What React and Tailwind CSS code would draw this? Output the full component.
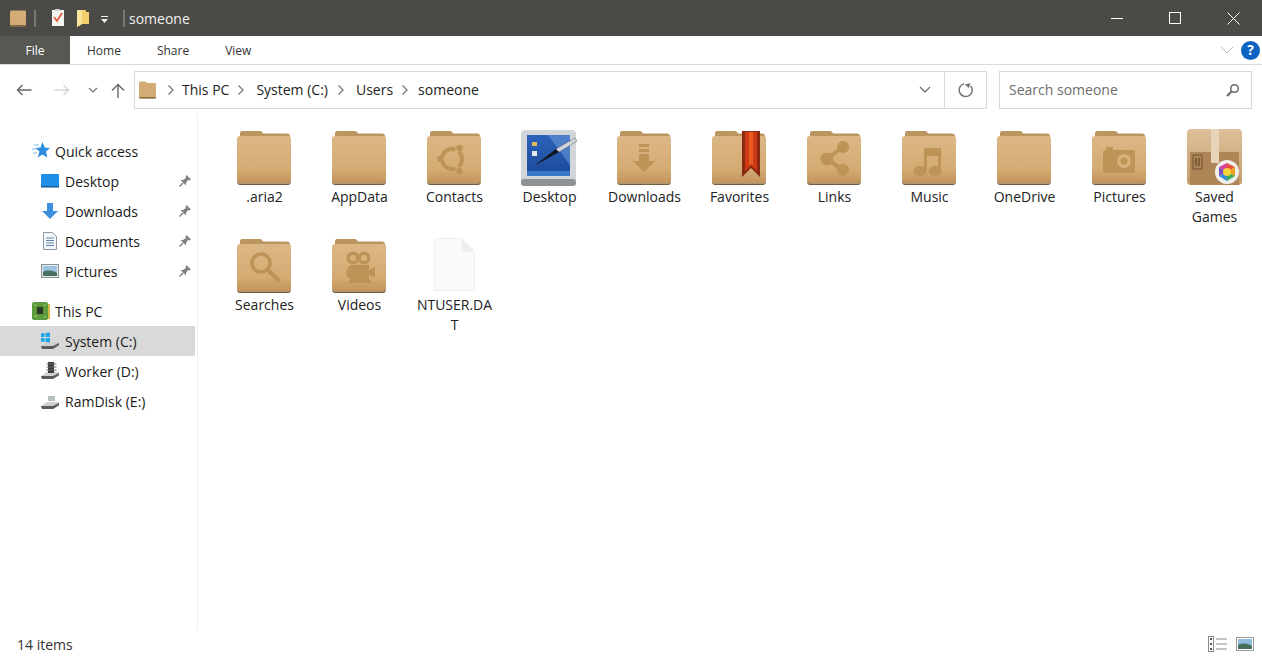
import React from 'react';

const Chevron = () => (
  <svg width="8" height="12" viewBox="0 0 8 12" className="shrink-0">
    <path d="M1.5 1.5 6 6l-4.5 4.5" fill="none" stroke="#7a7a7a" strokeWidth="1.3" />
  </svg>
);

const FolderSvg = ({ children, id }) => (
  <svg width="58" height="58" viewBox="1 0 58 58">
    <defs>
      <linearGradient id={id} x1="0" y1="0" x2="0" y2="1">
        <stop offset="0" stopColor="#dcb785" />
        <stop offset="0.7" stopColor="#d4ab73" />
        <stop offset="1" stopColor="#c2945a" />
      </linearGradient>
    </defs>
    <path d="M5 5.5C5 3.5 6 3 8 3h16c2 0 3 .5 4 2.500h24c2 0 3 1 3 3v6H5z" fill="#ba955f" />
    <path d="M2 11c0-2 1-3 3-3h48c2 0 3 1 3 3v41c0 2.500-1 3.500-3 3.500H5c-2 0-3-1-3-3.500z" fill={`url(#${id})`} />
    <path d="M2 52c0 2.500 1 3.500 3 3.500h48c2 0 3-1 3-3.500v1c0 2.500-1 4-3 4H5c-2 0-3-1.500-3-4z" fill="#74603f" />
    {children}
  </svg>
);

const emblem = '#bd9358';

const emblems = {
  ubuntu: (
    <g>
      <circle cx="27" cy="31" r="10" fill="none" stroke={emblem} strokeWidth="4" strokeDasharray="16.900 4" transform="rotate(71.500 27 31)" />
      <circle cx="15.500" cy="31" r="3.200" fill={emblem} />
      <circle cx="34.500" cy="20" r="3.200" fill={emblem} />
      <circle cx="34.500" cy="43" r="3.200" fill={emblem} />
    </g>
  ),
  download: (
    <g fill={emblem}>
      <rect x="24" y="16" width="10" height="3" />
      <rect x="24" y="21" width="10" height="3" />
      <path d="M24 26h10v7h6L29 44 18 33h6z" />
    </g>
  ),
  favorite: (
    <g>
      <path d="M32 3h18v46l-9-9-9 9z" fill="#8a2a12" />
      <path d="M35 4h12v39l-6-6-6 6z" fill="#cf3a16" />
      <path d="M39 4h4v34l-2-2-2 2z" fill="#e85a20" />
    </g>
  ),
  links: (
    <g>
      <path d="M38 19 22 31l16 11" fill="none" stroke={emblem} strokeWidth="4" />
      <circle cx="38" cy="19" r="6" fill={emblem} />
      <circle cx="22" cy="31" r="6.500" fill={emblem} />
      <circle cx="38" cy="42" r="6" fill={emblem} />
    </g>
  ),
  music: (
    <g fill={emblem}>
      <ellipse cx="20" cy="43" rx="6.500" ry="5" />
      <ellipse cx="35" cy="43" rx="6.500" ry="5" />
      <path d="M24 20h17v22h-3V28H27v15h-3z" />
    </g>
  ),
  camera: (
    <g fill={emblem}>
      <path d="M16 22v-3h7v3h20c1 0 2 1 2 2v19c0 1-1 2-2 2H15c-1 0-2-1-2-2V24c0-1 1-2 3-2z" />
      <circle cx="34" cy="33" r="7" fill="#d8b27d" />
      <circle cx="34" cy="33" r="3.500" fill={emblem} />
    </g>
  ),
  search: (
    <g>
      <circle cx="26" cy="27" r="9" fill="none" stroke={emblem} strokeWidth="3.500" />
      <path d="m33 34 10 10" stroke={emblem} strokeWidth="4.500" strokeLinecap="round" />
    </g>
  ),
  video: (
    <g>
      <circle cx="23" cy="22" r="6.500" fill={emblem} />
      <circle cx="34" cy="22" r="6.500" fill={emblem} />
      <circle cx="23" cy="22" r="3" fill="#d8b27d" />
      <circle cx="34" cy="22" r="3" fill="#d8b27d" />
      <path d="M20 29h19v5l6-3v11l-6-3v4l3 4H18l3-4c-3-1-5-3-5-6 0-3 2-5 4-8z" fill={emblem} />
    </g>
  ),
};

const DesktopIcon = () => (
  <svg width="58" height="58" viewBox="0 0 58 58">
    <defs>
      <linearGradient id="screen" x1="0" y1="0" x2="0" y2="1">
        <stop offset="0" stopColor="#2a62b8" />
        <stop offset="1" stopColor="#1d4a9a" />
      </linearGradient>
    </defs>
    <rect x="0" y="2" width="55" height="56" rx="4" fill="#d3d6d9" />
    <rect x="0" y="51" width="55" height="7" rx="3" fill="#8e9297" />
    <rect x="6" y="7" width="43" height="41" fill="url(#screen)" />
    <path d="M27 7h22v30z" fill="#5d8ed0" opacity="0.7" />
    <rect x="6" y="43" width="43" height="5" fill="#3b78c8" />
    <rect x="11" y="14" width="5" height="4" fill="#e0b860" />
    <rect x="11" y="23" width="5" height="5" fill="#e8e8e8" />
    <path d="m13 38 22-17 3 3z" fill="#10151f" />
    <path d="m35 21 19-11 2 3-18 11z" fill="#d5d8dc" stroke="#6a6e74" strokeWidth="0.600" />
  </svg>
);

const SavedGamesIcon = () => (
  <svg width="58" height="58" viewBox="0 0 58 58">
    <defs>
      <linearGradient id="box" x1="0" y1="0" x2="0" y2="1">
        <stop offset="0" stopColor="#ddc19b" />
        <stop offset="1" stopColor="#c49c6c" />
      </linearGradient>
    </defs>
    <rect x="1" y="1" width="55" height="56" rx="4" fill="url(#box)" />
    <path d="M4 24h49v33H4z" fill="#ad8557" />
    <path d="M25 1h8v34h-8z" fill="#e6d3b8" />
    <path d="M7 27h9v14H7z" fill="none" stroke="#6f5231" strokeWidth="1" />
    <path d="M10 30v8M13 30v8" stroke="#6f5231" strokeWidth="1.500" />
    <circle cx="41" cy="44" r="12" fill="#f1efec" />
    <path d="m41 35 8 4-8 5z" fill="#e94f3c" />
    <path d="m49 39 0 9-8-4z" fill="#f0a020" />
    <path d="m49 48-8 5v-9z" fill="#3cae55" />
    <path d="m41 53-8-5 8-4z" fill="#2f8fd8" />
    <path d="m33 48 0-9 8 5z" fill="#7c4fc0" />
    <path d="m33 39 8-4v9z" fill="#d8409a" />
    <circle cx="41" cy="44" r="4" fill="#f6d23c" />
  </svg>
);

const FileIcon = () => (
  <svg width="58" height="58" viewBox="0 0 58 58">
    <path d="M8.500 2.500h27l13 13v39h-40z" fill="#fafafa" stroke="#f0f0f0" />
    <path d="M35.500 2.500v13h13z" fill="#efefef" />
  </svg>
);

const items = [
  { name: '.aria2', type: 'folder' },
  { name: 'AppData', type: 'folder' },
  { name: 'Contacts', type: 'folder', emblem: 'ubuntu' },
  { name: 'Desktop', type: 'desktop' },
  { name: 'Downloads', type: 'folder', emblem: 'download' },
  { name: 'Favorites', type: 'folder', emblem: 'favorite' },
  { name: 'Links', type: 'folder', emblem: 'links' },
  { name: 'Music', type: 'folder', emblem: 'music' },
  { name: 'OneDrive', type: 'folder' },
  { name: 'Pictures', type: 'folder', emblem: 'camera' },
  { name: 'Saved Games', type: 'saved' },
  { name: 'Searches', type: 'folder', emblem: 'search' },
  { name: 'Videos', type: 'folder', emblem: 'video' },
  { name: 'NTUSER.DAT', type: 'file' },
];

const ItemIcon = ({ item, index }) => {
  if (item.type === 'desktop') return <DesktopIcon />;
  if (item.type === 'saved') return <SavedGamesIcon />;
  if (item.type === 'file') return <FileIcon />;
  return <FolderSvg id={`folder-${index}`}>{emblems[item.emblem]}</FolderSvg>;
};

const Pin = () => (
  <svg width="14" height="14" viewBox="0 0 14 14" className="absolute left-[178px] top-[8px]">
    <path d="M8.500 1 13 5.500 11.500 6.500 10 6 8 9v2.500L2.500 6H5l3-2-.5-1.500z" fill="#808080" />
    <path d="M5 9 1.500 12.500" stroke="#808080" strokeWidth="1.500" />
  </svg>
);

const NavIcon = ({ name }) => {
  if (name === 'star') {
    return (
      <svg width="18" height="18" viewBox="0 0 18 18">
        <path d="m10.500 0 2.200 5.500 5.300.5-4 3.600 1.200 5.900-4.700-3-4.700 3L7.500 9.600 3.500 6l5-.5z" fill="#2b8ce0" />
        <path d="M2 3h5M0 7h4M1 11h4" stroke="#7dbcf0" strokeWidth="1" />
      </svg>
    );
  }
  if (name === 'desktop') {
    return (
      <svg width="18" height="14" viewBox="0 0 18 14">
        <rect width="18" height="13" rx="1" fill="#1e8ee6" />
        <path d="M0 12h18v1.500H0z" fill="#0c5f9f" />
      </svg>
    );
  }
  if (name === 'downloads') {
    return (
      <svg width="18" height="18" viewBox="0 0 18 18">
        <path d="M6 1h6v8h5l-8 8-8-8h5z" fill="#3f8fe0" />
      </svg>
    );
  }
  if (name === 'documents') {
    return (
      <svg width="14" height="18" viewBox="0 0 14 18">
        <path d="M.5.500h9l4 4v13H.5z" fill="#f4f7fa" stroke="#8d99a6" />
        <path d="M3 6h8M3 8.500h8M3 11h8M3 13.500h8" stroke="#5d87ad" />
      </svg>
    );
  }
  if (name === 'pictures') {
    return (
      <svg width="18" height="14" viewBox="0 0 18 14">
        <rect x=".5" y=".5" width="17" height="13" fill="#e8eaec" stroke="#8a8f94" />
        <rect x="2" y="2" width="14" height="10" fill="#9cc3e0" />
        <path d="M2 8c4-2 9-2 14 1v3H2z" fill="#47705e" />
      </svg>
    );
  }
  if (name === 'pc') {
    return (
      <svg width="20" height="20" viewBox="0 0 20 20">
        <rect x="14" y="3" width="5" height="15" fill="#d8b94c" />
        <rect x="1" y="1" width="16" height="18" rx="2" fill="#5c9a3c" />
        <rect x="6" y="6" width="6" height="7" fill="#2c3a22" />
        <path d="M3 4h2M3 15h3M13 4h2M13 16h2" stroke="#a4d07c" />
      </svg>
    );
  }
  const top = {
    win: (
      <g fill="#1aa6e8">
        <path d="M1 1.500 4.500 1v4H1zM5.500 1 10 .5V5H5.500zM1 6h3.500v4L1 9.500zM5.500 6H10v4.500l-4.500-.5z" />
      </g>
    ),
    chip: (
      <g>
        <rect x="8" y="0" width="6" height="11" fill="#3c3c3c" />
        <path d="M6.500 2h10M6.500 5h10M6.500 8h10" stroke="#6a6a6a" />
      </g>
    ),
    plain: <rect x="8" y="4" width="7" height="5" fill="#b4bfbf" />,
  };
  return (
    <svg width="20" height="18" viewBox="0 0 20 18">
      <path d="M1 14 7 10h12v4l-6 3H2z" fill="#d0d0d0" />
      <path d="M1 14h12l6-3v2l-6 4H2z" fill="#5a5a5a" />
      {top[name]}
    </svg>
  );
};

const quick = [
  { label: 'Desktop', icon: 'desktop' },
  { label: 'Downloads', icon: 'downloads' },
  { label: 'Documents', icon: 'documents' },
  { label: 'Pictures', icon: 'pictures' },
];

const drives = [
  { label: 'System (C:)', icon: 'win', active: true },
  { label: 'Worker (D:)', icon: 'chip' },
  { label: 'RamDisk (E:)', icon: 'plain' },
];

const NavRow = ({ label, icon, indent, pinned, active }) => (
  <div className={`relative flex h-[30px] items-center ${active ? 'bg-[#d9d9d9]' : ''} ${indent ? 'pl-[40px]' : 'pl-[30px]'}`}>
    <div className={`flex justify-center ${indent ? 'w-[20px] mr-[5px]' : 'w-[21px] mr-[4px]'}`}>
      <NavIcon name={icon} />
    </div>
    <span className="text-[14px] text-[#1a1a1a]">{label}</span>
    {pinned && <Pin />}
  </div>
);

export default function App() {
  return (
    <div className="flex h-[657px] w-[1262px] flex-col overflow-hidden bg-white font-['Open_Sans','Noto_Sans',sans-serif]">
      {/* title bar */}
      <div className="flex h-[36px] shrink-0 items-center bg-[#4b4a47] pl-[9px]">
        <svg width="18" height="18" viewBox="0 0 18 18">
          <path d="M1 3c0-1 .5-1.500 1.500-1.500h13c1 0 1.500.5 1.500 1.500v13c0 1-.5 1.500-1.500 1.500h-13C1.500 17.500 1 17 1 16z" fill="#d3ab74" />
          <path d="M1 16h16c0 1-.5 1.500-1.500 1.500h-13C1.500 17.500 1 17 1 16z" fill="#7a6240" />
        </svg>
        <div className="ml-[7px] h-[17px] w-[2px] border border-[#777]" />
        <svg width="16" height="18" viewBox="0 0 16 18" className="ml-[14px]">
          <path d="M2 1h12v16H2z" fill="#f6f4f0" />
          <path d="M4 8 7 12l5-8" fill="none" stroke="#e0603a" strokeWidth="1.800" />
          <path d="M5 0h5v2H5z" fill="#cfcfcf" />
        </svg>
        <svg width="14" height="18" viewBox="0 0 14 18" className="ml-[10px]">
          <path d="M1 1h9v2h3v12H6l-5 3z" fill="#f4cf6c" />
          <path d="M1 1h5v14l-5 3z" fill="#fbe59c" />
        </svg>
        <svg width="10" height="8" viewBox="0 0 10 8" className="ml-[10px] mt-[3px]">
          <path d="M1 0h7v1H1z" fill="#eee" />
          <path d="M1 3h7L4.500 7z" fill="#eee" />
        </svg>
        <div className="ml-[13px] h-[17px] w-[2px] border border-[#777]" />
        <span className="ml-[4px] text-[14px] text-[#f0f0f0]">someone</span>
        <div className="ml-auto flex h-full">
          <div className="flex w-[58px] items-center justify-center">
            <div className="h-px w-[12px] bg-white" />
          </div>
          <div className="flex w-[58px] items-center justify-center">
            <div className="h-[12px] w-[12px] border border-white" />
          </div>
          <div className="flex w-[58px] items-center justify-center">
            <svg width="13" height="13" viewBox="0 0 13 13">
              <path d="m.5.500 12 12M12.500.500l-12 12" stroke="#fff" strokeWidth="1" />
            </svg>
          </div>
        </div>
      </div>

      {/* ribbon tabs */}
      <div className="flex h-[29px] shrink-0 items-stretch border-b border-[#dadbdc] text-[12px] text-[#333]">
        <div className="flex w-[70px] items-center justify-center bg-[#585754] pt-[1px] text-white">File</div>
        <div className="ml-[17px] flex items-center pt-[1px]">Home</div>
        <div className="ml-[36px] flex items-center pt-[1px]">Share</div>
        <div className="ml-[36px] flex items-center pt-[1px]">View</div>
        <div className="ml-auto flex items-center pr-[2px]">
          <svg width="14" height="8" viewBox="0 0 14 8" className="mr-[7px]">
            <path d="m1 1 6 6 6-6" fill="none" stroke="#bbb" />
          </svg>
          <div className="flex h-[19px] w-[19px] items-center justify-center rounded-full bg-[#0a63c0] text-[14px] font-bold leading-none text-white">?</div>
        </div>
      </div>

      {/* address row */}
      <div className="flex h-[48px] shrink-0 items-center pt-[1px]">
        <div className="flex w-[134px] items-center">
          <svg width="16" height="12" viewBox="0 0 16 12" className="ml-[16px]">
            <path d="M15.500 6H1.500M6.500 1l-5 5 5 5" fill="none" stroke="#666" strokeWidth="1.400" />
          </svg>
          <svg width="16" height="12" viewBox="0 0 16 12" className="ml-[22px]">
            <path d="M.5 6h14M9.500 1l5 5-5 5" fill="none" stroke="#d4d4d4" strokeWidth="1.400" />
          </svg>
          <svg width="10" height="6" viewBox="0 0 10 6" className="ml-[18px]">
            <path d="m1 1 4 4 4-4" fill="none" stroke="#777" strokeWidth="1.200" />
          </svg>
          <svg width="14" height="16" viewBox="0 0 14 16" className="ml-[13px] mt-[3px]">
            <path d="M7 15V1.500M1 7.500l6-6 6 6" fill="none" stroke="#666" strokeWidth="1.400" />
          </svg>
        </div>
        <div className="flex h-[38px] w-[853px] items-center border border-[#d9d9d9] pl-[3px]">
          <svg width="19" height="18" viewBox="0 0 19 18">
            <path d="M1 2c0-1 .5-1.500 1.500-1.500h5L9 2h7.500c1 0 1.500.5 1.500 1.500v12c0 1-.5 2-1.500 2h-14C1.500 17.500 1 16.500 1 15.500z" fill="#d3ab74" />
            <path d="M1 16h17c0 1-.5 1.500-1.500 1.500h-14C1.500 17.500 1 17 1 16z" fill="#8a6d44" />
          </svg>
          <div className="ml-[10px]"><Chevron /></div>
          <span className="ml-[7px] text-[14px] text-[#222]">This PC</span>
          <div className="ml-[8px]"><Chevron /></div>
          <span className="ml-[11px] text-[14px] text-[#222]">System (C:)</span>
          <div className="ml-[9px]"><Chevron /></div>
          <span className="ml-[11px] text-[14px] text-[#222]">Users</span>
          <div className="ml-[8px]"><Chevron /></div>
          <span className="ml-[9px] text-[14px] text-[#222]">someone</span>
          <div className="ml-auto flex h-full items-center">
            <svg width="12" height="7" viewBox="0 0 12 7" className="mr-[13px]">
              <path d="m1 1 5 5 5-5" fill="none" stroke="#666" strokeWidth="1.200" />
            </svg>
            <div className="flex h-full w-[42px] items-center justify-center border-l border-[#d9d9d9]">
              <svg width="16" height="16" viewBox="0 0 16 16">
                <path d="M4 2.800A6.500 6.500 0 1 0 11 2.500" fill="none" stroke="#777" strokeWidth="1.500" transform="rotate(20 8 8)" />
                <path d="M10 0v5.500L5 3z" fill="#777" transform="rotate(20 8 8)" />
              </svg>
            </div>
          </div>
        </div>
        <div className="ml-[12px] flex h-[38px] w-[253px] items-center justify-between border border-[#d9d9d9] pl-[9px] pr-[11px]">
          <span className="text-[14px] text-[#6d6d6d]">Search someone</span>
          <svg width="14" height="14" viewBox="0 0 14 14">
            <circle cx="8.500" cy="5.500" r="3.800" fill="none" stroke="#666" strokeWidth="1.500" />
            <path d="M5.500 8.500 1 13" stroke="#666" strokeWidth="2" />
          </svg>
        </div>
      </div>

      {/* body */}
      <div className="flex min-h-0 flex-1">
        <div className="w-[198px] shrink-0 border-r border-[#f0f0f0] pr-[2px] pt-[23px]">
          <NavRow label="Quick access" icon="star" />
          {quick.map((q) => (
            <NavRow key={q.label} label={q.label} icon={q.icon} indent pinned />
          ))}
          <div className="h-[10px]" />
          <NavRow label="This PC" icon="pc" />
          {drives.map((d) => (
            <NavRow key={d.label} label={d.label} icon={d.icon} indent active={d.active} />
          ))}
        </div>
        <div className="grid flex-1 auto-rows-[108px] grid-cols-[repeat(11,95px)] content-start pl-[19px] pt-[15px]">
          {items.map((item, i) => (
            <div key={item.name} className="flex flex-col items-center">
              <div className="h-[58px]">
                <ItemIcon item={item} index={i} />
              </div>
              <div className="mt-[1px] w-[80px] break-words text-center text-[14px] leading-[20px] text-[#222]">
                {item.name}
              </div>
            </div>
          ))}
        </div>
      </div>

      {/* status bar */}
      <div className="flex h-[26px] shrink-0 items-center justify-between pl-[17px] pr-[8px]">
        <span className="text-[14px] text-[#333]">14 items</span>
        <div className="flex items-center gap-[8px]">
          <svg width="20" height="16" viewBox="0 0 20 16">
            <rect x=".5" y=".5" width="5" height="15" fill="#fff" stroke="#8c8c8c" />
            <path d="M2 3h2M2 8h2M2 13h2" stroke="#555" strokeWidth="2" />
            <path d="M8 3h11M8 8h11M8 13h11" stroke="#8c8c8c" />
          </svg>
          <svg width="18" height="14" viewBox="0 0 18 14">
            <rect x=".5" y=".5" width="17" height="13" fill="#fff" stroke="#9a9a9a" />
            <rect x="2" y="2" width="14" height="10" fill="#8fbde0" />
            <path d="M2 8c4-2 9-2 14 1v3H2z" fill="#47705e" />
          </svg>
        </div>
      </div>
    </div>
  );
}
